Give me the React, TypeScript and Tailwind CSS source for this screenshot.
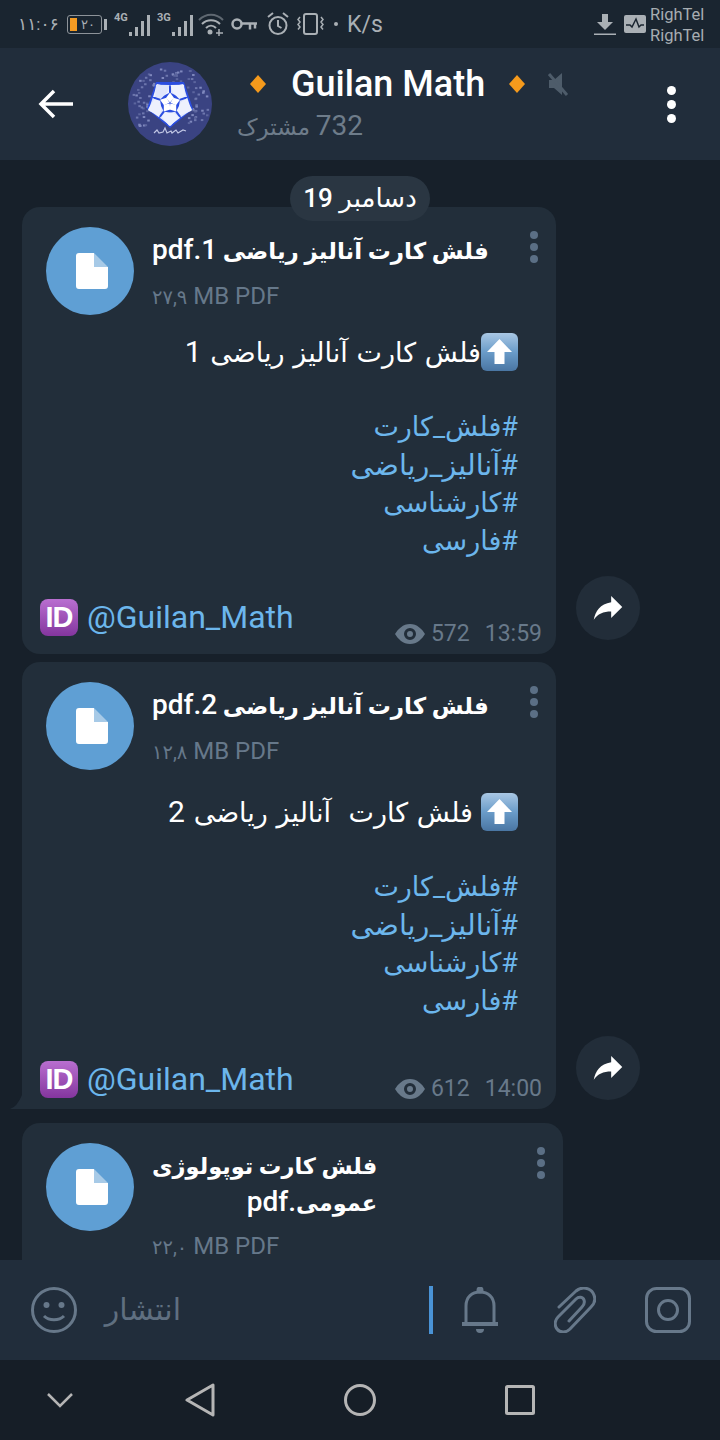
import React from "react";

const FONT = "font-['Roboto','DejaVu_Sans',sans-serif]";

function Bars({ label }: { label: string }) {
  const hs = [4, 9, 15, 21];
  return (
    <div className="relative w-[36px] h-[24px] flex items-end justify-end gap-[3px]">
      <span className="absolute left-0 top-0 text-[11px] leading-[12px] font-bold text-[#aab0b5]">{label}</span>
      {hs.map((h, i) => (
        <span key={i} className={`w-[3px] bg-[#aab0b5] ${i === 0 ? "h-[4px]" : i === 1 ? "h-[9px]" : i === 2 ? "h-[15px]" : "h-[21px]"}`} />
      ))}
    </div>
  );
}

function StatusBar() {
  return (
    <div className="h-[48px] bg-[#1a2530] flex items-center pl-[18px] pr-[16px] text-[#aab0b5] shrink-0">
      <span className="w-[38px] text-[17px] leading-none">۱۱:۰۶</span>
      <div className="ml-[11px] flex items-center gap-[2px]">
        <div className="w-[35px] h-[19px] rounded-[3px] border border-[#8d9399] flex items-center p-[2px]">
          <span className="w-[7px] h-[13px] bg-[#f49b23]" />
          <span className="flex-1 text-center text-[13px] leading-none">۲۰</span>
        </div>
        <span className="w-[3px] h-[11px] bg-[#aab0b5]" />
      </div>
      <div className="ml-[7px]"><Bars label="4G" /></div>
      <div className="ml-[7px]"><Bars label="3G" /></div>
      <svg className="ml-[5px]" width="26" height="24" viewBox="0 0 26 24" fill="none">
        <path d="M1 8C8 1 18 1 25 8" stroke="#5f6871" strokeWidth="2" />
        <path d="M4 12C9 7 17 7 22 12" stroke="#aab0b5" strokeWidth="2" />
        <path d="M8 16C11 13 15 13 18 16" stroke="#aab0b5" strokeWidth="2" />
        <circle cx="12" cy="20" r="2.5" fill="#aab0b5" />
        <path d="M18 21h7M21 17v7" stroke="#aab0b5" strokeWidth="1.5" />
      </svg>
      <svg className="ml-[7px]" width="26" height="14" viewBox="0 0 26 14" fill="none" stroke="#aab0b5" strokeWidth="2.5">
        <circle cx="6" cy="7" r="4.5" />
        <path d="M11 6.500h15M19 6.500v6M24 6.500v5" />
      </svg>
      <svg className="ml-[9px]" width="24" height="24" viewBox="0 0 24 24" fill="none" stroke="#aab0b5" strokeWidth="2">
        <circle cx="12" cy="13.500" r="8.500" />
        <path d="M12 8v6l3.500 2M2 5l5-4M22 5l-5-4" />
      </svg>
      <svg className="ml-[7px]" width="28" height="24" viewBox="0 0 28 24" fill="none" stroke="#aab0b5" strokeWidth="2">
        <rect x="7" y="2" width="13" height="20" rx="2" />
        <path d="M3 5l-2 2.500 2 2.500-2 2.500 2 2.500-2 2.500M24 5l2 2.500-2 2.500 2 2.500-2 2.500 2 2.500" strokeWidth="1.500" />
      </svg>
      <span className="ml-[9px] w-[4px] h-[4px] rounded-full bg-[#aab0b5]" />
      <span className="ml-[9px] text-[23px] leading-none">K/s</span>
      <svg className="ml-auto" width="22" height="24" viewBox="0 0 22 24" fill="#aab0b5">
        <path d="M8 2h6v8h5l-8 8-8-8h5z" />
        <rect y="21.500" width="22" height="1.500" />
      </svg>
      <svg className="ml-[8px]" width="22" height="18" viewBox="0 0 22 18">
        <rect width="22" height="18" rx="2" fill="#aab0b5" />
        <path d="M2 10h4l2 2 4-8 3 8 2-2h3" fill="none" stroke="#1a2530" strokeWidth="1.500" />
      </svg>
      <div className="ml-[4px] w-[54px] text-[16.500px] leading-[21px] text-[#a7adb2] mt-[1px]">
        <div>RighTel</div>
        <div>RighTel</div>
      </div>
    </div>
  );
}

function Avatar() {
  const specks: [number, number, number][] = [];
  for (let a = 0; a < 240; a++) {
    const hx = Math.abs(Math.sin(a * 12.9898) * 43758.5453) % 1;
    const hy = Math.abs(Math.sin(a * 78.233) * 12543.123) % 1;
    const x = 4 + hx * 76;
    const y = 4 + hy * 76;
    const d = Math.hypot(x - 42, y - 42);
    if (d < 40 && d > 22 && y < 63) specks.push([x, y, a % 3]);
  }
  const cols = ["#6d76ad", "#7f88bd", "#5c659e"];
  return (
    <svg width="84" height="84" viewBox="0 0 84 84" className="shrink-0">
      <circle cx="42" cy="42" r="42" fill="#3a4382" />
      {specks.map(([x, y, k], i) => (
        <rect key={i} x={x} y={y} width="2.500" height="2" fill={cols[k]} />
      ))}
      <polygon points="28,20 56,20 65,47 42,66 19,47" fill="#2a4de0" />
      {[0, 72, 144, 216, 288].map((d) => (
        <g key={d} transform={`rotate(${d} 42 41)`}>
          <polygon points="29,22 41,25 41,31 33,35 25,35" fill="#eef1fd" />
          <polygon points="55,22 43,25 43,31 51,35 59,35" fill="#dfe5fb" />
          <polygon points="42,40.500 38,36 42,30.500 46,36" fill="#ffffff" />
        </g>
      ))}
      <path d="M26 71l3-3 2 3 4-1 2-4 2 5 4-2 1 2 4-3 2 3 5-3 3 1" fill="none" stroke="#c1c6e4" strokeWidth="1.200" />
    </svg>
  );
}

function Diamond({ className }: { className: string }) {
  return (
    <svg className={className} width="16" height="18" viewBox="0 0 16 18">
      <polygon points="8,0 16,9 8,18 0,9" fill="#f59a1c" />
    </svg>
  );
}

function Header() {
  return (
    <div className="h-[112px] bg-[#212d3b] flex items-center shrink-0">
      <svg className="ml-[38px]" width="36" height="30" viewBox="0 0 36 30" fill="none" stroke="#fff" strokeWidth="3.500">
        <path d="M35 15H3M16 2L3 15l13 13" />
      </svg>
      <div className="ml-[54px]"><Avatar /></div>
      <div className="ml-[25px] flex flex-col mt-[-2px]">
        <div className="flex items-center h-[46px]">
          <Diamond className="ml-[13px]" />
          <span className="ml-[25px] text-[36px] leading-none font-medium text-white">Guilan Math</span>
          <Diamond className="ml-[24px]" />
          <svg className="ml-[22px]" width="22" height="24" viewBox="0 0 22 24" fill="#4e5c6a">
            <path d="M2 8h5l8-7v22l-8-7H2z" />
            <path d="M2 2l18 21" stroke="#4e5c6a" strokeWidth="3" />
          </svg>
        </div>
        <div dir="rtl" className="self-start text-[23px] leading-[34px] text-[#6e7c8a] whitespace-pre mt-[2px]">
          <span className="text-[28px]">732</span> مشترک
        </div>
      </div>
      <div className="ml-auto mr-[44px] flex flex-col gap-[5px]">
        <span className="w-[9px] h-[9px] rounded-full bg-white" />
        <span className="w-[9px] h-[9px] rounded-full bg-white" />
        <span className="w-[9px] h-[9px] rounded-full bg-white" />
      </div>
    </div>
  );
}

function UpEmoji() {
  return (
    <svg width="37" height="38" viewBox="0 0 37 38" className="inline-block align-middle shrink-0">
      <defs>
        <linearGradient id="upg" x1="0" y1="0" x2="0" y2="1">
          <stop offset="0" stopColor="#a9c7e4" />
          <stop offset="0.5" stopColor="#6a9cc9" />
          <stop offset="1" stopColor="#4a76a3" />
        </linearGradient>
      </defs>
      <rect width="37" height="38" rx="6" fill="url(#upg)" />
      <path d="M18.500 6L31 19h-7.500v12h-10V19H6z" fill="#fff" />
    </svg>
  );
}

function IdEmoji() {
  return (
    <div className="w-[38px] h-[37px] rounded-[8px] bg-gradient-to-b from-[#b96fd0] to-[#84359e] flex items-center justify-center shrink-0">
      <span className="font-['Liberation_Sans',sans-serif] text-[29px] leading-none font-bold tracking-[-1px] text-white">ID</span>
    </div>
  );
}

function FileIcon() {
  return (
    <div className="w-[88px] h-[88px] rounded-full bg-[#5f9fd4] flex items-center justify-center shrink-0">
      <svg className="ml-[4px]" width="32" height="36" viewBox="0 0 32 36">
        <path d="M3 0h15v14h14v19a3 3 0 0 1-3 3H3a3 3 0 0 1-3-3V3a3 3 0 0 1 3-3z" fill="#fff" />
        <path d="M18 0l14 14H18z" fill="#fff" fillOpacity="0.45" />
      </svg>
    </div>
  );
}

function Dots() {
  return (
    <div className="flex flex-col gap-[4px] mt-[4px]">
      <span className="w-[8px] h-[8px] rounded-full bg-[#5b6f85]" />
      <span className="w-[8px] h-[8px] rounded-full bg-[#5b6f85]" />
      <span className="w-[8px] h-[8px] rounded-full bg-[#5b6f85]" />
    </div>
  );
}

function FileRow({ title, size, sizeGap }: { title: React.ReactNode; size: string; sizeGap: string }) {
  return (
    <div className="flex pl-[24px] pt-[20px]">
      <FileIcon />
      <div className="ml-[18px] flex flex-col">
        {title}
        <div dir="ltr" className={`text-[24px] leading-[30px] text-[#66788a] ${sizeGap}`}>
          <span className="text-[19.500px]">{size}</span> MB PDF
        </div>
      </div>
      <div className="ml-auto mr-[18px]"><Dots /></div>
    </div>
  );
}

function Fwd({ className }: { className: string }) {
  return (
    <div className={`w-[64px] h-[64px] rounded-full bg-[#222d39] flex items-center justify-center shrink-0 ${className}`}>
      <svg className="mt-[-2px]" width="38" height="38" viewBox="0 0 24 24" fill="#fff">
        <path d="M14 9V5l7 7-7 7v-4.100c-5 0-8.500 1.600-11 5.100 1-5 4-10 11-11z" />
      </svg>
    </div>
  );
}

function Post({
  n, size, first, views, time, top, bottom, tail, sizeGap, after,
}: {
  n: number; size: string; first: React.ReactNode; views: number; time: string; top: string; bottom: string; tail?: boolean; sizeGap: string; after: string;
}) {
  return (
    <div className={`relative w-[534px] bg-[#222e3a] rounded-[18px] ${tail ? "rounded-bl-none" : ""} ${bottom}`}>
      {tail && (
        <svg className="absolute left-[-12px] bottom-0" width="12" height="14" viewBox="0 0 12 14" fill="#222e3a">
          <path d="M12 0v14H0q7-2 12-14z" />
        </svg>
      )}
      <FileRow
        size={size}
        sizeGap={sizeGap}
        title={
          <div dir="rtl" className="self-start text-[23px] leading-[34px] font-bold text-white mt-[6px] whitespace-nowrap">
            فلش کارت آنالیز ریاضی <span className="text-[28px] font-medium">{n}.pdf</span>
          </div>
        }
      />
      <div dir="rtl" className={`pr-[38px] text-[27px] leading-[38px] text-white whitespace-pre ${top}`}>
        <div className="flex items-center h-[38px] [word-spacing:2px]">{first}</div>
        <div className="h-[37px]" />
        <div className="text-[#6cb6ec]">
          <div>#فلش_کارت</div>
          <div className="text-[28.700px]">#آنالیز_ریاضی</div>
          <div>#کارشناسی</div>
          <div>#فارسی</div>
        </div>
        <div className={after} />
      </div>
      <div className="flex items-center pl-[18px] gap-[9px] h-[38px] text-[32px] leading-none text-[#6cb6ec]">
        <IdEmoji />
        <span className="mt-[-1px]">@Guilan_Math</span>
      </div>
      <div className="absolute right-[14px] bottom-[9px] flex items-center text-[#68798a] text-[23px] leading-none">
        <svg width="30" height="20" viewBox="0 0 30 20" fill="#68798a">
          <path fillRule="evenodd" d="M15 0c7 0 12 5 15 10-3 5-8 10-15 10S3 15 0 10C3 5 8 0 15 0zm0 4a6 6 0 1 0 0 12 6 6 0 0 0 0-12zm0 3a3 3 0 1 1 0 6 3 3 0 0 1 0-6z" />
        </svg>
        <span className="ml-[6px]">{views}</span>
        <span className="ml-[15px]">{time}</span>
      </div>
    </div>
  );
}

function Chat() {
  return (
    <div className="relative flex-1 min-h-0 overflow-hidden bg-[#17202a] pt-[47px] pl-[22px] flex flex-col">
      <div dir="rtl" className="absolute left-[290px] top-[16px] w-[140px] h-[45px] rounded-full bg-[#2a3642] z-10 flex items-center justify-center text-[26px] font-medium text-white">
        دسامبر 19
      </div>
      <div className="flex items-end gap-[20px]">
        <Post
          n={1}
          size="۲۷,۹"
          views={572}
          time="13:59"
          top="mt-[18px]"
          bottom="pb-[18px]"
          sizeGap="mt-[12px]"
          after="h-[38px]"
          first={<><UpEmoji /><span>فلش کارت آنالیز ریاضی <span className="text-[30px]">1</span></span></>}
        />
        <Fwd className="mb-[14px]" />
      </div>
      <div className="flex items-end gap-[20px] mt-[8px]">
        <Post
          n={2}
          size="۱۲,۸"
          views={612}
          time="14:00"
          top="mt-[23px]"
          bottom="pb-[11px]"
          sizeGap="mt-[12px]"
          after="h-[40px]"
          tail
          first={<><UpEmoji /><span className="mr-[8px]">فلش کارت  آنالیز ریاضی <span className="text-[30px]">2</span></span></>}
        />
        <Fwd className="mb-[9px]" />
      </div>
      <div className="mt-[14px] w-[541px] h-[300px] bg-[#222e3a] rounded-[18px] shrink-0">
        <FileRow
          size="۲۲,۰"
          sizeGap="mt-[10px]"
          title={
            <div dir="rtl" className="self-start text-[22.500px] leading-[36px] font-bold text-white mt-[5px] whitespace-nowrap">
              <div>فلش کارت توپولوژی</div>
              <div>عمومی<span className="text-[28px] font-medium">.pdf</span></div>
            </div>
          }
        />
      </div>
    </div>
  );
}

function InputBar() {
  const c = "#67788a";
  return (
    <div className="h-[100px] bg-[#212d3b] flex items-center shrink-0 relative z-10">
      <svg className="ml-[31px]" width="46" height="46" viewBox="0 0 46 46" fill="none" stroke={c} strokeWidth="3">
        <circle cx="23" cy="23" r="21.500" />
        <circle cx="15.500" cy="18" r="3" fill={c} stroke="none" />
        <circle cx="30.500" cy="18" r="3" fill={c} stroke="none" />
        <path d="M13 29c5 5 15 5 20 0" />
      </svg>
      <span dir="rtl" className="ml-[26px] w-[78px] text-[30px] leading-none text-[#5f6f80]">انتشار</span>
      <span className="ml-[248px] w-[4px] h-[48px] bg-[#4a93d6]" />
      <svg className="ml-[28px]" width="38" height="46" viewBox="0 0 38 46" fill="none" stroke={c} strokeWidth="3">
        <path d="M5 36V19C5 10 11 5 19 5s14 5 14 14v17" />
        <path d="M1 37h36" strokeWidth="4" />
        <circle cx="19" cy="3" r="2" fill={c} />
        <path d="M15 42h8a4 4 0 0 1-8 0z" fill={c} stroke="none" />
      </svg>
      <svg className="ml-[55px]" width="42" height="46" viewBox="14 8 42 46" fill="none" stroke={c} strokeWidth="3" strokeLinecap="round">
        <path d="M19 28L36 12C42 7 50 9 53 14C56 19 55 24 51 28L30 50C26 54 20 54 17 50C14 46 15 41 18 38L36 20C39 17 43 18 44 21C45 24 44 26 42 28L29 42" />
      </svg>
      <svg className="ml-[49px]" width="46" height="46" viewBox="0 0 46 46" fill="none" stroke={c} strokeWidth="3">
        <rect x="1.500" y="1.500" width="43" height="43" rx="10" />
        <circle cx="23" cy="23" r="9.500" />
      </svg>
    </div>
  );
}

function NavBar() {
  const c = "#b5b5b5";
  return (
    <div className="h-[80px] bg-[#161e27] flex items-center shrink-0">
      <svg className="ml-[47px]" width="26" height="16" viewBox="0 0 26 16" fill="none" stroke={c} strokeWidth="2.500">
        <path d="M1 2l12 12L25 2" />
      </svg>
      <svg className="ml-[112px]" width="30" height="34" viewBox="0 0 30 34" fill="none" stroke={c} strokeWidth="3" strokeLinejoin="round">
        <path d="M28 2v30L2 17z" />
      </svg>
      <svg className="ml-[129px]" width="32" height="32" viewBox="0 0 32 32" fill="none" stroke={c} strokeWidth="3">
        <circle cx="16" cy="16" r="14.500" />
      </svg>
      <svg className="ml-[129px]" width="30" height="30" viewBox="0 0 30 30" fill="none" stroke={c} strokeWidth="3">
        <rect x="1.500" y="1.500" width="27" height="27" rx="1" />
      </svg>
    </div>
  );
}

export default function App() {
  return (
    <div className={`w-[720px] h-[1440px] flex flex-col overflow-hidden ${FONT}`}>
      <StatusBar />
      <Header />
      <Chat />
      <InputBar />
      <NavBar />
    </div>
  );
}
